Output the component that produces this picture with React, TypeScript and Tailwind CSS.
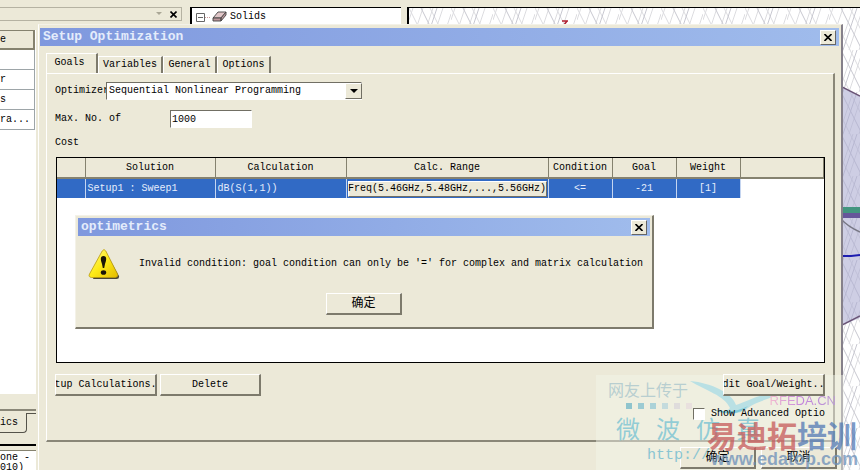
import type { ReactNode } from 'react'
import clsx from 'clsx'

const tabs = ['Goals', 'Variables', 'General', 'Options']

const columns = [
  { label: '', width: 'w-[28px]' },
  { label: 'Solution', width: 'w-[130px]' },
  { label: 'Calculation', width: 'w-[131px]' },
  { label: 'Calc. Range', width: 'w-[202px]' },
  { label: 'Condition', width: 'w-[64px]' },
  { label: 'Goal', width: 'w-[64px]' },
  { label: 'Weight', width: 'w-[64px]' },
  { label: '', width: '' },
]

const listRows = ['', 'r', 's', 'ra...']

function PushButton({ children, className }: { children: ReactNode; className?: string }) {
  return (
    <button
      type="button"
      className={clsx(
        'relative z-10 flex h-[22px] items-center justify-center overflow-hidden whitespace-nowrap border border-b-2 border-r-2 border-b-[#7d7a6c] border-l-white border-r-[#7d7a6c] border-t-white bg-[#ece9d8]',
        className
      )}
    >
      {children}
    </button>
  )
}

function TitleBar({ title }: { title: string }) {
  return (
    <header className="flex h-[18px] items-center justify-between bg-linear-to-r from-[#7f98de] to-[#a0bcec] pl-[3px] pr-[3px]">
      <h2 className="text-[13px] font-bold leading-4 text-[#e4ecfb]">{title}</h2>
      <button
        type="button"
        aria-label="Close"
        className="flex h-[15px] w-4 items-center justify-center border border-b-[#666] border-l-white border-r-[#666] border-t-white bg-[#ece9d8]"
      >
        <svg width="8" height="7" viewBox="0 0 8 7" stroke="#000" strokeWidth="1.6">
          <path d="M.5 0 7.5 7M7.5 0 .5 7" />
        </svg>
      </button>
    </header>
  )
}

function ModelView() {
  return (
    <div className="relative flex-1 overflow-hidden border-l-2 border-t border-black bg-white">
      <svg className="absolute inset-0 h-full w-full" fill="none">
        <defs>
          <pattern id="mesh" width="42" height="42" patternUnits="userSpaceOnUse">
            <path
              d="M14 0 0 42M24 0 10 42M34 0 20 42M42 6 30 42M4 0 0 12M42 30 38 42M0 0 21 42M21 0 42 42"
              stroke="#dcdce0"
            />
            <path d="M28 0 14 42M12 0 33 42" stroke="#c8c8d0" />
          </pattern>
        </defs>
        <rect width="100%" height="100%" fill="url(#mesh)" />
        <path d="M153 13h6M158 13l-3 4" stroke="#b02030" strokeWidth="1.5" />
      </svg>
      <svg className="absolute right-0 top-0 h-full w-5" fill="none">
        <path d="M0 78 20 88V310L0 318Z" fill="#aeaed2" fillOpacity=".6" />
        <path d="M0 78 20 88M0 318 20 308" stroke="#6b5577" strokeWidth="1.5" />
        <path d="M0 199h20v6H0z" fill="#43957f" />
        <path d="M0 205h20v5H0z" fill="#66559a" />
        <path d="M0 210q8 9 20 14" stroke="#777784" strokeWidth="1.5" />
        <path d="M0 248h11l9-1" stroke="#1d1db0" strokeWidth="2" />
      </svg>
    </div>
  )
}

function Workspace() {
  return (
    <div className="flex h-full">
      <aside className="flex w-[190px] shrink-0 flex-col">
        <div className="mr-2 mt-[7px] flex h-[14px] shrink-0 items-center justify-end gap-2 border border-l-0 border-[#b5b2a2] pr-1">
          <svg width="6" height="4" fill="#aaa796">
            <path d="M0 0h6L3 3z" />
          </svg>
          <svg width="7" height="7" stroke="#000" strokeWidth="1.6">
            <path d="m.5.5 6 6m0-6-6 6" />
          </svg>
        </div>
        <div className="mt-[9px] h-[364px] w-[36px] shrink-0 bg-white">
          <div className="flex h-5 w-[35px] items-center border-b-2 border-r-2 border-t border-[#85826f] bg-[#ece9d8]">e</div>
          {listRows.map((text, i) => (
            <div key={i} className="flex h-5 w-[35px] items-center border-b border-r border-[#9da5a8]">
              {text}
            </div>
          ))}
        </div>
        <div className="mt-[15px] h-[2px] w-[36px] shrink-0 bg-[#8a8778]" />
        <div className="mt-[2px] flex h-5 w-[36px] shrink-0">
          <div className="flex w-[27px] items-center rounded-br-sm border-b border-r border-[#55534a]">ics</div>
          <div className="flex-1 border-t border-[#55534a]" />
        </div>
        <div className="mt-[11px] h-[2px] w-[36px] shrink-0 bg-black" />
        <div className="mt-1 w-[36px] flex-1 overflow-hidden whitespace-pre border-t border-[#85826f] bg-white pt-[2px] leading-[10px]">
          {'one - S\n010)'}
        </div>
      </aside>
      <div className="mr-[6px] mt-[7px] flex h-10 w-[211px] shrink-0 items-start border-l-2 border-t border-black bg-white">
        <div className="flex h-[17px] items-center pl-1">
          <svg width="32" height="13" viewBox="0 0 32 13" fill="none">
            <path d="M.5 3.5h8v8h-8zM2 7.5h5" stroke="#666" />
            <path d="M9 7.5h6" stroke="#c99" strokeDasharray="1 1" />
            <path d="m17 8 5-6h8l-5 6z" fill="#e0c6c8" stroke="#444" strokeWidth=".9" />
            <path d="M17 8h8v3h-8zM25 8l5-6v3l-5 6z" fill="#bd979c" stroke="#444" strokeWidth=".9" />
          </svg>
          <span className="ml-[2px]">Solids</span>
        </div>
      </div>
      <div className="flex flex-1 pt-[7px]">
        <ModelView />
      </div>
    </div>
  )
}

function GoalsTable() {
  return (
    <div className="ml-[1px] h-[206px] border border-black bg-white">
      <table className="w-full table-fixed border-collapse text-center">
        <thead>
          <tr className="h-5 bg-[#ece9d8]">
            {columns.map((col, i) => (
              <th
                key={i}
                className={clsx('border-b-2 border-r border-[#85826f] p-0 font-normal', col.width)}
              >
                {col.label}
              </th>
            ))}
          </tr>
        </thead>
        <tbody>
          <tr className="h-5 text-[#e6eefc] *:border-r *:border-[#c5d5f0] *:bg-[#316ac5] *:p-0">
            <td />
            <td className="text-left">
              <span className="pl-[2px]">Setup1 : Sweep1</span>
            </td>
            <td className="text-left">
              <span className="pl-[2px]">dB(S(1,1))</span>
            </td>
            <td>
              <button
                type="button"
                className="mx-auto flex h-4 w-[199px] items-center justify-center whitespace-nowrap border border-b-[#716f64] border-l-white border-r-[#716f64] border-t-white bg-[#ece9d8] text-black"
              >
                Freq(5.46GHz,5.48GHz,...,5.56GHz)
              </button>
            </td>
            <td>&lt;=</td>
            <td>-21</td>
            <td>[1]</td>
            <td className="border-r-0! bg-white!" />
          </tr>
        </tbody>
      </table>
    </div>
  )
}

function WarningIcon() {
  return (
    <svg width="32" height="32" viewBox="0 0 32 32">
      <defs>
        <linearGradient id="warn" x1="0" y1="0" x2="1" y2="1">
          <stop offset="0" stopColor="#fffb8a" />
          <stop offset=".5" stopColor="#fdea18" />
          <stop offset="1" stopColor="#e3bb00" />
        </linearGradient>
      </defs>
      <path d="M17.5 3.5 31 28q.5 3-2.500 3H5z" fill="#4a4638" />
      <path d="M14.200 3q1.800-3 3.600 0L29.500 26q1 3-2 3.500H3.500q-3.500-.5-2-3.500z" fill="url(#warn)" stroke="#b99a10" strokeWidth=".8" />
      <path d="M12.800 11q0-3 2.700-3t2.700 3q0 2-1.200 5l-.8 4h-1.400l-.8-4q-1.200-3-1.200-5z" fill="#1b1608" />
      <ellipse cx="15.500" cy="24.500" rx="2.700" ry="2.300" fill="#1b1608" />
    </svg>
  )
}

function MessageBox() {
  return (
    <section
      role="alertdialog"
      aria-label="optimetrics"
      className="absolute left-9 right-[187px] top-[190px] border-b-2 border-l border-r-2 border-t border-b-[#7d7a6c] border-l-[#f4f2e8] border-r-[#7d7a6c] border-t-[#f4f2e8] bg-[#ece9d8] p-[2px]"
    >
      <TitleBar title="optimetrics" />
      <div className="mt-3 flex items-center gap-[19px] pl-[10px]">
        <WarningIcon />
        <p className="whitespace-nowrap">
          Invalid condition: goal condition can only be '=' for complex and matrix calculation
        </p>
      </div>
      <div className="mb-[10px] mt-[13px] flex justify-center">
        <PushButton className="w-[76px] text-[12px]">确定</PushButton>
      </div>
    </section>
  )
}

function Bird() {
  return (
    <svg className="absolute left-[94px] top-1" width="104" height="40" viewBox="0 0 104 40">
      <path d="M0 2C22 4 42 14 46 26 58 22 70 14 96 12 82 20 66 22 58 29 48 37 32 36 24 31q14 2 16-2C34 16 16 12 0 2z" fill="#b9e0e4" />
      <path d="M24 31q20 4 34-4-10 12-34 4z" fill="#7fc9d9" />
    </svg>
  )
}

function Watermark() {
  return (
    <div className="pointer-events-none absolute bottom-0 right-0 h-[95px] w-[264px]">
      <div className="absolute inset-y-0 left-0 right-4 bg-[#f5f6ec]/45" />
      <Bird />
      <span className="absolute left-3 top-1 font-['Noto_Sans_CJK_SC',sans-serif] text-[16px] leading-5 text-[#a9c6cc]/80">网友上传于</span>
      <div className="absolute left-[30px] top-[28px] flex gap-[6px] *:size-[6px]">
        <i className="bg-[#8fc4cd]" />
        <i className="bg-[#9ccbd3]" />
        <i className="bg-[#abd2d8]" />
        <i className="bg-[#c4dbdd]" />
        <i className="bg-[#dfdcdc]" />
        <i className="bg-[#e9e0de]" />
      </div>
      <span className="absolute right-6 top-4 z-20 bg-linear-to-r from-[#f3b9cf] via-[#c384dd] to-[#b99bd3] bg-clip-text font-['Liberation_Sans',sans-serif] text-[13px] leading-5 text-transparent">
        RFEDA.CN
      </span>
      <div className="absolute left-5 top-[39px] flex gap-4 font-['Noto_Sans_CJK_SC',sans-serif] text-[24px] leading-7 text-[#79c3d3]/80">
        <span>微</span>
        <span>波</span>
        <span>仿</span>
        <span>真</span>
      </div>
      <span className="absolute left-[51px] top-[71px] z-20 text-[15px] leading-5 text-[#8ac5d2]">http://</span>
    </div>
  )
}

function SiteMark() {
  return (
    <div className="pointer-events-none absolute bottom-0 right-0 z-20 h-[54px] w-[155px] font-['Noto_Sans_CJK_SC',sans-serif] font-bold">
      <div className="absolute left-[2px] top-[-2px] whitespace-nowrap text-[30px] leading-[40px]">
        <span className="text-[#c65a5a]/75">易迪拓</span>
        <span className="text-[#5279b5]/75">培训</span>
      </div>
      <span className="absolute right-[2px] top-[33px] font-['Liberation_Sans',sans-serif] text-[18px] leading-5 text-[#6b8fb9]/75">
        www.edatop.com
      </span>
    </div>
  )
}

function SetupDialog() {
  return (
    <section
      role="dialog"
      aria-label="Setup Optimization"
      className="absolute bottom-0 left-[38px] right-[17px] top-6 border-l border-r-2 border-t border-l-white border-r-[#85808a] border-t-[#f4f2e8] bg-[#ece9d8] pl-[1px] pr-[2px] pt-[3px]"
    >
      <TitleBar title="Setup Optimization" />
      <nav className="ml-[6px] mt-[7px] flex items-end">
        {tabs.map((tab, i) => (
          <button
            key={tab}
            type="button"
            className={clsx(
              'flex items-center justify-center border-l border-r-2 border-t border-l-white border-r-[#7d7a6c] border-t-white',
              i === 0 && 'h-5 w-[52px] pb-[2px] pr-1',
              i === 1 && 'h-[17px] w-[65px]',
              i === 2 && 'h-[17px] w-[54px]',
              i === 3 && 'h-[17px] w-[54px]'
            )}
          >
            {tab}
          </button>
        ))}
      </nav>
      <div className="ml-[6px] mr-1 h-[369px] border-b-2 border-l border-r-2 border-t border-b-[#8a8778] border-l-white border-r-[#8a8778] border-t-white pl-2 pr-2 pt-2">
        <div className="flex h-[18px] items-center">
          <label htmlFor="optimizer" className="w-[51px] overflow-hidden">
            Optimizer
          </label>
          <div className="relative">
            <select
              id="optimizer"
              className="h-[18px] w-64 appearance-none border border-b-white border-l-[#716f64] border-r-white border-t-[#716f64] bg-white pl-[2px]"
            >
              <option>Sequential Nonlinear Programming</option>
            </select>
            <span className="pointer-events-none absolute right-0 top-[1px] flex h-4 w-[17px] items-center justify-center border border-b-[#716f64] border-l-white border-r-[#716f64] border-t-white bg-[#ece9d8]">
              <svg width="8" height="4">
                <path d="M0 0h8L4 4z" />
              </svg>
            </span>
          </div>
        </div>
        <div className="mt-[10px] flex h-[18px] items-center">
          <label htmlFor="iterations" className="w-[115px]">
            Max. No. of
          </label>
          <input
            id="iterations"
            defaultValue="1000"
            className="h-[18px] w-[82px] border border-b-white border-l-[#716f64] border-r-white border-t-[#716f64] bg-white pl-[1px]"
          />
        </div>
        <p className="mb-[6px] mt-[7px]">Cost</p>
        <GoalsTable />
        <div className="mt-[11px] flex gap-[3px]">
          <PushButton className="w-[102px]">Setup Calculations...</PushButton>
          <PushButton className="w-[101px]">Delete</PushButton>
          <PushButton className="ml-auto w-[102px]">Edit Goal/Weight...</PushButton>
        </div>
        <label className="relative z-10 ml-auto mt-[10px] flex w-[132px] items-center gap-[6px] overflow-hidden whitespace-nowrap">
          <input
            type="checkbox"
            className="size-3 shrink-0 appearance-none border border-b-white border-l-[#716f64] border-r-white border-t-[#716f64] bg-white"
          />
          Show Advanced Options
        </label>
      </div>
      <div className="mr-[2px] mt-[5px] flex justify-end gap-[5px] text-[12px]">
        <PushButton className="w-[76px]">确定</PushButton>
        <PushButton className="w-[76px]">取消</PushButton>
      </div>
      <MessageBox />
    </section>
  )
}

export default function App() {
  return (
    <main className="relative h-screen min-h-[470px] overflow-hidden bg-[#ece9d8] font-['Liberation_Mono','Noto_Sans_CJK_SC',monospace] text-[10px] leading-4 text-black">
      <Workspace />
      <SetupDialog />
      <Watermark />
      <SiteMark />
    </main>
  )
}
